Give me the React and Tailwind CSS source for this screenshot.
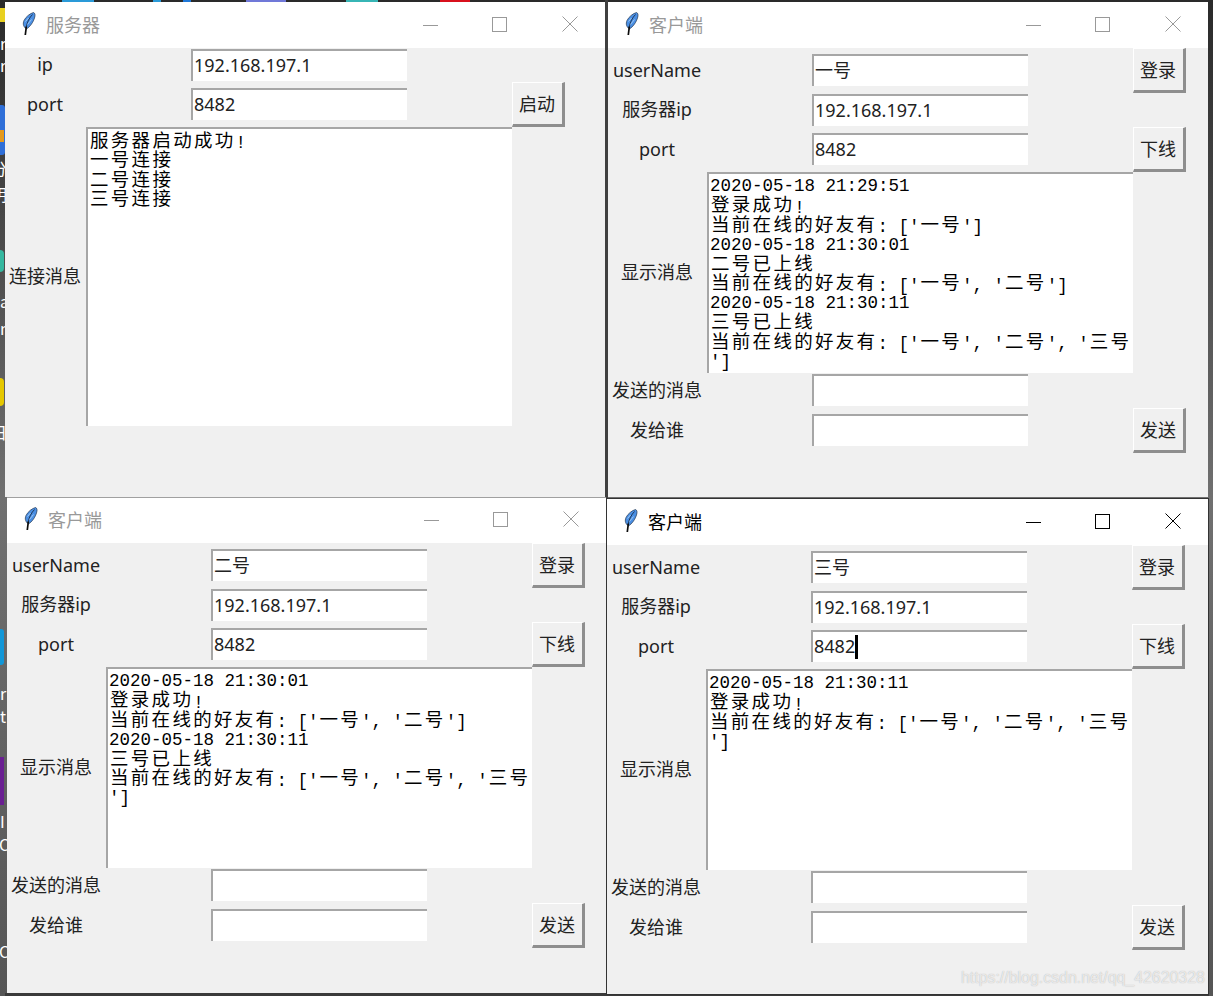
import React from "react";

const ui = "font-['Noto_Sans','Noto_Sans_CJK_SC',sans-serif] text-[18px] text-[#222]";

function Feather() {
  return (
    <svg width="15" height="24" viewBox="0 0 15 24" className="shrink-0">
      <path d="M11.500 0.500C13 1 13.500 3 12.500 6C11.500 9 10 12 7 15L4.500 17C1.500 15 0.500 12 2 8.500C4 4.500 8 1.500 11.500 0.500Z" fill="#4a8fe4" stroke="#24364f" strokeWidth="0.700" />
      <path d="M10.500 2.500C7.500 5.500 5 10 4 16" fill="none" stroke="#1a2e4a" strokeWidth="0.900" />
      <path d="M3.500 9.500L6.500 6M5.500 12.500L9.500 7.500" fill="none" stroke="#b5d8f8" strokeWidth="0.800" />
      <path d="M4.300 14.500L3.300 23" fill="none" stroke="#0c0c0c" strokeWidth="1.700" />
    </svg>
  );
}

function TitleBar({ title, active }) {
  const text = active ? "text-black" : "text-[#999]";
  return (
    <div className={`h-[46px] shrink-0 bg-white flex items-center pl-[17px] pb-[2px] ${text}`}>
      <Feather />
      <span className="ml-[9px] font-['Noto_Sans_CJK_SC','Noto_Sans',sans-serif] text-[18px] leading-none">{title}</span>
      <div className="ml-auto flex">
        <div className="w-[70px] h-[44px] flex items-center justify-center">
          <svg width="15" height="15" viewBox="0 0 15 15"><path d="M0 8.500H15" stroke="currentColor" strokeWidth="1" /></svg>
        </div>
        <div className="w-[70px] h-[44px] flex items-center justify-center pr-[2px]">
          <svg width="15" height="15" viewBox="0 0 15 15"><rect x="0.500" y="0.500" width="14" height="14" fill="none" stroke="currentColor" strokeWidth="1" /></svg>
        </div>
        <div className="w-[70px] h-[44px] flex items-center justify-center">
          <svg width="16" height="16" viewBox="0 0 16 16"><path d="M0.500 0.500L15.500 15.500M15.500 0.500L0.500 15.500" stroke="currentColor" strokeWidth="1" /></svg>
        </div>
      </div>
    </div>
  );
}

function Label({ children }) {
  return <div className={`${ui} flex items-center justify-center whitespace-nowrap leading-none pb-[2px] pr-[1px]`}>{children}</div>;
}

function Entry({ value, caret }) {
  return (
    <div className="flex items-center justify-center pb-[1px]">
      <div className={`${ui} w-[216px] h-[32px] bg-white border-t-2 border-l-2 border-t-[#a6a6a6] border-l-[#a6a6a6] pl-[1px] pb-[2px] flex items-center leading-none`}>
        {value}
        {caret && <span className="w-[3px] h-[24px] bg-black mt-[2px]" />}
      </div>
    </div>
  );
}

function Btn({ children }) {
  return (
    <div className={`${ui} bg-[#f0f0f0] border-t border-l border-t-white border-l-white border-b-[3px] border-r-[3px] border-b-[#8e8e8e] border-r-[#8e8e8e] flex items-center justify-center leading-none pr-[1px]`}>
      {children}
    </div>
  );
}

function Line({ text }) {
  const parts = text.split(/([\x00-\x7f]+)/).filter(Boolean);
  return (
    <div className="h-[19.5px] leading-[19.5px] whitespace-pre text-black">
      {parts.map((p, i) =>
        /^[\x00-\x7f]/.test(p) ? (
          <span key={i} className="font-['Liberation_Mono',monospace] text-[17.5px]">{p}</span>
        ) : (
          <span key={i} className="relative -top-[1.5px] pl-[1px] font-['Noto_Sans_CJK_SC',sans-serif] text-[18.5px] tracking-[2.3px]">{p}</span>
        )
      )}
    </div>
  );
}

function TextBox({ lines }) {
  return (
    <div className="bg-white border-t-2 border-l-2 border-t-[#a6a6a6] border-l-[#a6a6a6] pt-[2px] pl-[1px] overflow-hidden">
      {lines.map((l, i) => (
        <Line key={i} text={l} />
      ))}
    </div>
  );
}

function ServerWindow() {
  return (
    <section className="absolute left-[5px] top-[2px] w-[600px] h-[495px] bg-[#f0f0f0] flex flex-col">
      <TitleBar title="服务器" />
      <div className="grid grid-cols-[81px_426px_53px] grid-rows-[34px_45px_299px]">
        <Label>ip</Label>
        <Entry value="192.168.197.1" />
        <div />
        <Label>port</Label>
        <Entry value="8482" />
        <Btn>启动</Btn>
        <Label>连接消息</Label>
        <TextBox lines={["服务器启动成功!", "一号连接", "二号连接", "三号连接"]} />
      </div>
    </section>
  );
}

function ClientWindow({ pos, active, name, caret, lines }) {
  return (
    <section className={`absolute ${pos} bg-[#f0f0f0] flex flex-col`}>
      <TitleBar title="客户端" active={active} />
      <div className="grid grid-cols-[99px_426px_53px] grid-rows-[45px_34px_45px_201px_35px_45px]">
        <Label>userName</Label>
        <Entry value={name} />
        <Btn>登录</Btn>
        <Label>服务器ip</Label>
        <Entry value="192.168.197.1" />
        <div />
        <Label>port</Label>
        <Entry value="8482" caret={caret} />
        <Btn>下线</Btn>
        <Label>显示消息</Label>
        <TextBox lines={lines} />
        <div />
        <Label>发送的消息</Label>
        <Entry value="" />
        <div />
        <Label>发给谁</Label>
        <Entry value="" />
        <Btn>发送</Btn>
      </div>
    </section>
  );
}

function DesktopBits() {
  const glyph = "absolute left-0 font-['Noto_Sans_CJK_SC',sans-serif] text-white text-[16px] leading-none";
  return (
    <>
      <div className="absolute left-0 top-[8px] w-[5px] h-[14px] bg-[#e8d020]" />
      <div className="absolute left-0 top-[105px] w-[5px] h-[50px] bg-[#2f6fd8] rounded-r-[3px]" />
      <div className="absolute left-0 top-[130px] w-[4px] h-[12px] bg-[#e59a1c]" />
      <div className="absolute left-0 top-[250px] w-[4px] h-[22px] bg-[#35b8a0] rounded-r-full" />
      <div className="absolute left-0 top-[378px] w-[4px] h-[28px] bg-[#e6c800] rounded-r-full" />
      <div className="absolute left-0 top-[629px] w-[4px] h-[36px] bg-[#1197d8] rounded-r-[3px]" />
      <div className="absolute left-0 top-[757px] w-[4px] h-[48px] bg-[#6a1f92]" />
      <span className={`${glyph} top-[35px]`}>r</span>
      <span className={`${glyph} top-[57px]`}>r</span>
      <span className={`${glyph} top-[160px] -ml-[9px]`}>分</span>
      <span className={`${glyph} top-[186px] -ml-[9px]`}>明</span>
      <span className={`${glyph} top-[293px]`}>a</span>
      <span className={`${glyph} top-[320px]`}>n</span>
      <span className={`${glyph} top-[424px] -ml-[9px]`}>日</span>
      <span className={`${glyph} top-[685px]`}>r</span>
      <span className={`${glyph} top-[708px]`}>t</span>
      <span className={`${glyph} top-[813px]`}>I</span>
      <span className={`${glyph} top-[836px] -ml-[1px]`}>C</span>
      <span className={`${glyph} top-[943px] -ml-[1px]`}>C</span>
      <div className="absolute left-[62px] top-0 w-[32px] h-[2px] bg-[#2a9ad8]" />
      <div className="absolute left-[153px] top-0 w-[8px] h-[2px] bg-[#2a9ad8]" />
      <div className="absolute left-[183px] top-0 w-[8px] h-[2px] bg-[#1f78d8]" />
      <div className="absolute left-[246px] top-0 w-[40px] h-[2px] bg-[#7078d8]" />
      <div className="absolute left-[346px] top-0 w-[32px] h-[2px] bg-[#37b5b5]" />
      <div className="absolute left-[440px] top-0 w-[30px] h-[2px] bg-[#d8101c]" />
    </>
  );
}

export default function App() {
  return (
    <div className="relative w-[1213px] h-[996px] overflow-hidden bg-gradient-to-b from-[#2a2a2a] via-[#707070] to-[#555]">
      <DesktopBits />
      <div className="absolute left-[605px] top-0 w-[3px] h-[498px] bg-[#404040]" />
      <ServerWindow />
      <ClientWindow
        pos="left-[608px] top-[2px] w-[600px] h-[495px]"
        name="一号"
        lines={[
          "2020-05-18 21:29:51",
          "登录成功!",
          "当前在线的好友有: ['一号']",
          "2020-05-18 21:30:01",
          "二号已上线",
          "当前在线的好友有: ['一号', '二号']",
          "2020-05-18 21:30:11",
          "三号已上线",
          "当前在线的好友有: ['一号', '二号', '三号",
          "']",
        ]}
      />
      <div className="absolute left-[5px] top-[993px] w-[1204px] h-[3px] bg-[#3a3a3a]" />
      <ClientWindow
        pos="left-[7px] top-[497px] w-[599px] h-[496px]"
        name="二号"
        lines={[
          "2020-05-18 21:30:01",
          "登录成功!",
          "当前在线的好友有: ['一号', '二号']",
          "2020-05-18 21:30:11",
          "三号已上线",
          "当前在线的好友有: ['一号', '二号', '三号",
          "']",
        ]}
      />
      <div className="absolute left-[7px] top-[497px] w-[599px] h-px bg-[#a0a0a0]" />
      <div className="absolute left-[606px] top-[498px] w-[603px] h-[497px] bg-[#333]" />
      <ClientWindow
        pos="left-[607px] top-[499px] w-[601px] h-[495px]"
        active
        name="三号"
        caret
        lines={["2020-05-18 21:30:11", "登录成功!", "当前在线的好友有: ['一号', '二号', '三号", "']"]}
      />
      <div className="absolute left-[961px] top-[969px] font-['Liberation_Sans',sans-serif] text-[15.9px] leading-[18px] text-white/70 [text-shadow:0_0_1px_#aaa]">
        https://blog.csdn.net/qq_42620328
      </div>
    </div>
  );
}
